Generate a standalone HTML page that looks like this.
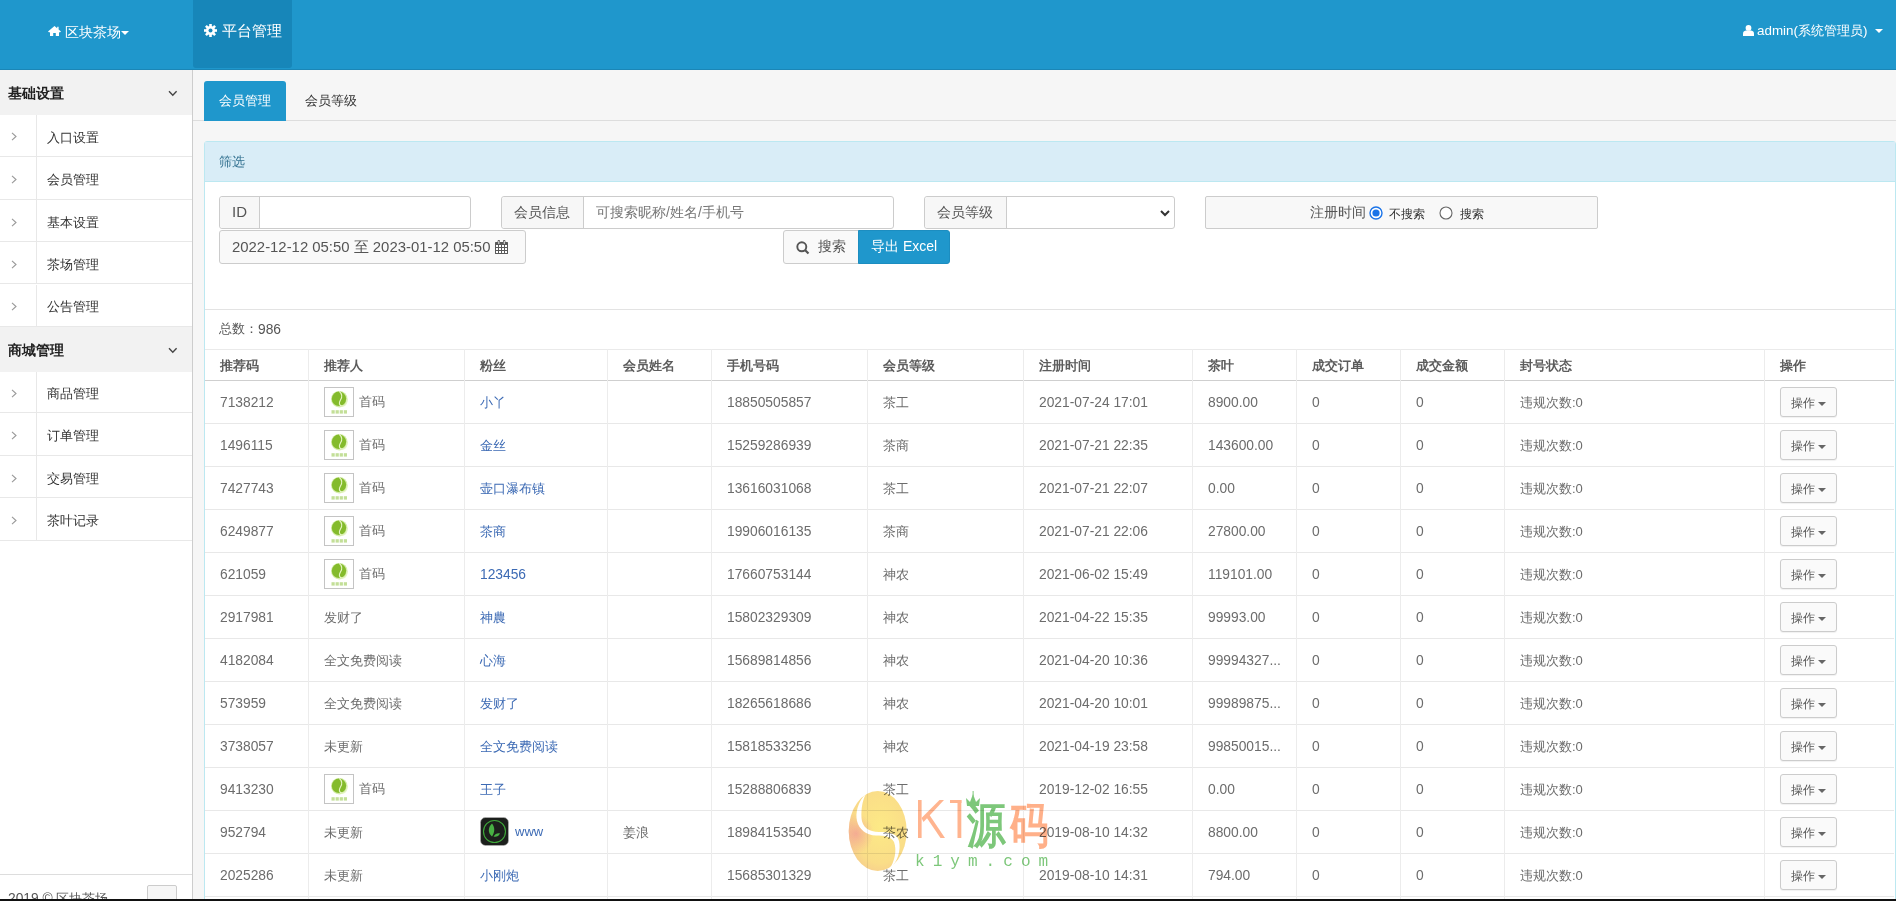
<!DOCTYPE html>
<html><head><meta charset="utf-8"><title>会员管理</title>
<style>
*{box-sizing:border-box;margin:0;padding:0}
html,body{width:1896px;height:901px;overflow:hidden;background:#f6f6f6;font-family:"Liberation Sans",sans-serif;font-size:13px;color:#666}
.abs{position:absolute}
#nav{position:absolute;left:0;top:0;width:1896px;height:70px;background:#1f97cc;border-bottom:1px solid #1b86b6}
#nav .act{position:absolute;left:193px;top:0;width:99px;height:68px;background:#1786b9;border-radius:0 0 3px 3px}
.wt{position:absolute;color:#fff;white-space:nowrap}
#side{position:absolute;left:0;top:70px;width:193px;height:829px;background:#fff;border-right:1px solid #cdcdcd}
.sh{position:absolute;left:0;width:192px;height:45px;background:#f2f2f2;color:#222;font-weight:bold;font-size:14px}
.sh span{position:absolute;left:8px;top:15px}
.sh svg{position:absolute;left:168px;top:20px}
.si{position:absolute;left:0;width:192px;border-bottom:1px solid #e8e8e8;color:#333}
.si:before{content:"";position:absolute;left:36px;top:0;bottom:0;border-left:1px solid #e8e8e8}
.si svg{position:absolute;left:11px}
.si span{position:absolute;left:47px}
#tabs{position:absolute;left:193px;top:70px;width:1703px;height:51px;border-bottom:1px solid #ddd}
.tab1{position:absolute;left:11px;top:11px;width:82px;height:40px;background:#1f97cc;color:#fff;border-radius:3px 3px 0 0}
.tab1 span,.tab2 span{position:absolute;left:15px;top:11px;white-space:nowrap}
.tab2{position:absolute;left:97px;top:11px;width:82px;height:40px;color:#333}
#panel{position:absolute;left:204px;top:141px;width:1692px;height:770px;background:#fff;border:1px solid #bce8f1;border-radius:3px}
#ph{position:absolute;left:0;top:0;width:1690px;height:40px;background:#d9edf7;border-bottom:1px solid #bce8f1;color:#31708f}
#ph span{position:absolute;left:14px;top:11px}
.ig{position:absolute;height:33px;border:1px solid #ccc;border-radius:3px;background:#fff}
.ig .ad{position:absolute;left:0;top:0;bottom:0;background:#f7f7f7;border-right:1px solid #ccc;border-radius:3px 0 0 3px;color:#555}
.ig .ad span{position:absolute;top:8px;white-space:nowrap}
.btn{position:absolute;height:34px;border:1px solid #ccc;border-radius:3px;background:#f9f9f9;color:#555;white-space:nowrap}
.d{font-size:13.8px;position:relative;top:1px}
.vl{position:absolute;width:1px;background:#ececec}
.hl{position:absolute;height:1px;background:#e8e8e8}
.c{position:absolute;white-space:nowrap;color:#6c6c6c}
.th{position:absolute;white-space:nowrap;color:#5c5c5c;font-weight:bold}
.lk{color:#3c6ab4}
.av{position:absolute;width:30px;height:30px;border:1px solid #c4c4c4;background:#fff}
.av svg{position:absolute;left:0;top:0}
.av2{position:absolute;width:29px;height:29px}
.ob{position:absolute;width:57px;height:30px;box-shadow:0 1px 1px rgba(0,0,0,.06);border:1px solid #ccc;border-radius:3px;background:#fafafa;color:#555;font-size:12px}
.ob span{position:absolute;left:10px;top:7px}
.ob i{position:absolute;left:37px;top:14px;width:0;height:0;border-left:4px solid transparent;border-right:4px solid transparent;border-top:4px solid #666}
</style></head><body>

<div id="nav"><div class="act"></div>
<svg class="abs" style="left:48px;top:26px" width="13" height="10" viewBox="0 0 13 10"><path d="M6.5 0 L0 5.6 L1.2 6.6 L2 5.9 L2 10 L5.2 10 L5.2 7 L7.8 7 L7.8 10 L11 10 L11 5.9 L11.8 6.6 L13 5.6 L10.6 3.5 L10.6 0.8 L9.2 0.8 L9.2 2.3 Z" fill="#fff"/></svg>
<span class="wt" style="left:65px;top:24px;font-size:14px">区块茶场</span>
<i class="abs" style="left:121px;top:31px;border-left:4px solid transparent;border-right:4px solid transparent;border-top:4px solid #fff"></i>
<svg class="abs" style="left:204px;top:24px" width="13" height="13" viewBox="0 0 13 13"><g fill="#fff"><circle cx="6.5" cy="6.5" r="4.6"/><rect x="5.2" y="0" width="2.6" height="13"/><rect x="0" y="5.2" width="13" height="2.6"/><rect x="5.2" y="0" width="2.6" height="13" transform="rotate(45 6.5 6.5)"/><rect x="5.2" y="0" width="2.6" height="13" transform="rotate(-45 6.5 6.5)"/></g><circle cx="6.5" cy="6.5" r="2" fill="#1786b9"/></svg>
<span class="wt" style="left:222px;top:22px;font-size:15px">平台管理</span>
<svg class="abs" style="left:1743px;top:25px" width="11" height="11" viewBox="0 0 11 11"><circle cx="5.5" cy="2.9" r="2.9" fill="#fff"/><path d="M0 11 L0 8.5 C0 6.5 2 5.6 3 5.6 L8 5.6 C9 5.6 11 6.5 11 8.5 L11 11 Z" fill="#fff"/></svg>
<span class="wt" style="left:1757px;top:22px;font-size:13.4px">admin(系统管理员)</span>
<i class="abs" style="left:1875px;top:29px;border-left:4px solid transparent;border-right:4px solid transparent;border-top:4px solid #fff"></i>
</div>

<div id="side">
<div class="sh" style="top:0px"><span>基础设置</span><svg width="10" height="7" viewBox="0 0 10 7"><path d="M1 1.3 L4.8 5.2 L8.6 1.3" stroke="#444" stroke-width="1.4" fill="none"/></svg></div>
<div class="si" style="top:44.5px;height:42.6px"><svg style="top:17.8px" width="6" height="9" viewBox="0 0 6 9"><path d="M1 0.8 L5 4.5 L1 8.2" stroke="#999" stroke-width="1.1" fill="none"/></svg><span style="top:14.0px">入口设置</span></div>
<div class="si" style="top:87.1px;height:42.7px"><svg style="top:17.9px" width="6" height="9" viewBox="0 0 6 9"><path d="M1 0.8 L5 4.5 L1 8.2" stroke="#999" stroke-width="1.1" fill="none"/></svg><span style="top:14.1px">会员管理</span></div>
<div class="si" style="top:129.8px;height:42.6px"><svg style="top:17.8px" width="6" height="9" viewBox="0 0 6 9"><path d="M1 0.8 L5 4.5 L1 8.2" stroke="#999" stroke-width="1.1" fill="none"/></svg><span style="top:14.0px">基本设置</span></div>
<div class="si" style="top:172.4px;height:42.1px"><svg style="top:17.5px" width="6" height="9" viewBox="0 0 6 9"><path d="M1 0.8 L5 4.5 L1 8.2" stroke="#999" stroke-width="1.1" fill="none"/></svg><span style="top:13.7px">茶场管理</span></div>
<div class="si" style="top:214.5px;height:42.4px"><svg style="top:17.7px" width="6" height="9" viewBox="0 0 6 9"><path d="M1 0.8 L5 4.5 L1 8.2" stroke="#999" stroke-width="1.1" fill="none"/></svg><span style="top:13.9px">公告管理</span></div>
<div class="sh" style="top:257px"><span>商城管理</span><svg width="10" height="7" viewBox="0 0 10 7"><path d="M1 1.3 L4.8 5.2 L8.6 1.3" stroke="#444" stroke-width="1.4" fill="none"/></svg></div>
<div class="si" style="top:301.6px;height:41.7px"><svg style="top:17.3px" width="6" height="9" viewBox="0 0 6 9"><path d="M1 0.8 L5 4.5 L1 8.2" stroke="#999" stroke-width="1.1" fill="none"/></svg><span style="top:13.5px">商品管理</span></div>
<div class="si" style="top:343.3px;height:42.7px"><svg style="top:17.8px" width="6" height="9" viewBox="0 0 6 9"><path d="M1 0.8 L5 4.5 L1 8.2" stroke="#999" stroke-width="1.1" fill="none"/></svg><span style="top:14.0px">订单管理</span></div>
<div class="si" style="top:386.0px;height:42.2px"><svg style="top:17.6px" width="6" height="9" viewBox="0 0 6 9"><path d="M1 0.8 L5 4.5 L1 8.2" stroke="#999" stroke-width="1.1" fill="none"/></svg><span style="top:13.8px">交易管理</span></div>
<div class="si" style="top:428.2px;height:42.9px"><svg style="top:18.0px" width="6" height="9" viewBox="0 0 6 9"><path d="M1 0.8 L5 4.5 L1 8.2" stroke="#999" stroke-width="1.1" fill="none"/></svg><span style="top:14.2px">茶叶记录</span></div>
<div class="hl" style="left:0;top:804px;width:192px;background:#ddd"></div>
<span class="c" style="left:8px;top:820px;color:#555"><span class="d" style="top:0">2019 ©</span> 区块茶场</span>
<div class="abs" style="left:147px;top:815px;width:30px;height:24px;border:1px solid #ccc;border-radius:2px;background:#f6f6f6"></div>
</div>
<div id="tabs"><div class="tab1"><span>会员管理</span></div><div class="tab2"><span>会员等级</span></div></div>
<div id="panel"><div id="ph"><span>筛选</span></div>
<div class="ig" style="left:14px;top:54px;width:252px"><div class="ad" style="width:40px"><span style="left:12px;font-size:15px;top:6px">ID</span></div></div>
<div class="ig" style="left:296px;top:54px;width:393px"><div class="ad" style="width:82px"><span style="left:12px;font-size:14px;top:7px">会员信息</span></div><span class="abs" style="left:94px;top:7px;font-size:14px;color:#777;white-space:nowrap">可搜索昵称/姓名/手机号</span></div>
<div class="ig" style="left:719px;top:54px;width:251px"><div class="ad" style="width:82px"><span style="left:12px;font-size:14px;top:7px">会员等级</span></div><svg class="abs" style="left:235px;top:13px" width="10" height="7" viewBox="0 0 10 7"><path d="M1 1 L5 5 L9 1" stroke="#333" stroke-width="2" fill="none"/></svg></div>
<div class="abs" style="left:1000px;top:54px;width:393px;height:33px;border:1px solid #ccc;border-radius:2px;background:#f8f8f8"></div>
<span class="abs" style="left:1105px;top:62px;color:#555;font-size:14px;white-space:nowrap">注册时间</span>
<svg class="abs" style="left:1164px;top:64px" width="14" height="14" viewBox="0 0 14 14"><circle cx="7" cy="7" r="6" fill="#fff" stroke="#1a73e8" stroke-width="1.4"/><circle cx="7" cy="7" r="3.6" fill="#1a73e8"/></svg>
<span class="abs" style="left:1184px;top:64px;color:#333;font-size:12px;white-space:nowrap">不搜索</span>
<svg class="abs" style="left:1234px;top:64px" width="14" height="14" viewBox="0 0 14 14"><circle cx="7" cy="7" r="6" fill="#fff" stroke="#666" stroke-width="1.1"/></svg>
<span class="abs" style="left:1255px;top:64px;color:#333;font-size:12px;white-space:nowrap">搜索</span>
<div class="abs" style="left:14px;top:88px;width:307px;height:34px;border:1px solid #ccc;border-radius:3px;background:#f9f9f9"><span class="abs" style="left:12px;top:7px;font-size:14.9px;color:#555;white-space:nowrap">2022-12-12 05:50 至 2023-01-12 05:50</span><svg class="abs" style="left:275px;top:9px" width="13" height="14" viewBox="0 0 13 14"><rect x="0" y="2" width="13" height="12" rx="0.6" fill="#5a5a5a"/><rect x="2.6" y="0" width="2.4" height="4.5" rx="1" fill="#5a5a5a"/><rect x="8" y="0" width="2.4" height="4.5" rx="1" fill="#5a5a5a"/><rect x="3.4" y="1" width="0.9" height="3" fill="#fff"/><rect x="8.8" y="1" width="0.9" height="3" fill="#fff"/><g fill="#fff"><rect x="1" y="5" width="2" height="2"/><rect x="4" y="5" width="2" height="2"/><rect x="7" y="5" width="2" height="2"/><rect x="10" y="5" width="2" height="2"/><rect x="1" y="8" width="2" height="2"/><rect x="4" y="8" width="2" height="2"/><rect x="7" y="8" width="2" height="2"/><rect x="10" y="8" width="2" height="2"/><rect x="1" y="11" width="2" height="2"/><rect x="4" y="11" width="2" height="2"/><rect x="7" y="11" width="2" height="2"/><rect x="10" y="11" width="2" height="2"/></g></svg></div>
<div class="btn" style="left:578px;top:88px;width:76px;border-radius:3px 0 0 3px"><svg class="abs" style="left:12px;top:10px" width="14" height="14" viewBox="0 0 14 14"><circle cx="5.8" cy="5.8" r="4.5" stroke="#555" stroke-width="1.9" fill="none"/><path d="M9 9 L12.5 12.5" stroke="#555" stroke-width="2.2"/></svg><span class="abs" style="left:34px;top:7px;font-size:14px">搜索</span></div>
<div class="btn" style="left:653px;top:88px;width:92px;background:#1f97cc;border-color:#1c8dc0;color:#fff;border-radius:0 3px 3px 0"><span class="abs" style="left:12px;top:7px;font-size:14px">导出 Excel</span></div>
<div class="hl" style="left:0;top:167px;width:1690px;background:#e3e3e3"></div>
<span class="c" style="left:14px;top:178px;color:#555">总数：<span class="d">986</span></span>
<div class="hl" style="left:0;top:207px;width:1689px;background:#eaeaea"></div>
<div class="hl" style="left:0;top:238px;width:1689px;background:#cfcfcf"></div>
<div class="hl" style="left:0;top:281px;width:1689px"></div>
<div class="hl" style="left:0;top:324px;width:1689px"></div>
<div class="hl" style="left:0;top:367px;width:1689px"></div>
<div class="hl" style="left:0;top:410px;width:1689px"></div>
<div class="hl" style="left:0;top:453px;width:1689px"></div>
<div class="hl" style="left:0;top:496px;width:1689px"></div>
<div class="hl" style="left:0;top:539px;width:1689px"></div>
<div class="hl" style="left:0;top:582px;width:1689px"></div>
<div class="hl" style="left:0;top:625px;width:1689px"></div>
<div class="hl" style="left:0;top:668px;width:1689px"></div>
<div class="hl" style="left:0;top:711px;width:1689px"></div>
<div class="hl" style="left:0;top:754px;width:1689px"></div>
<div class="vl" style="left:103px;top:207px;height:560px"></div>
<div class="vl" style="left:259px;top:207px;height:560px"></div>
<div class="vl" style="left:402px;top:207px;height:560px"></div>
<div class="vl" style="left:506px;top:207px;height:560px"></div>
<div class="vl" style="left:662px;top:207px;height:560px"></div>
<div class="vl" style="left:818px;top:207px;height:560px"></div>
<div class="vl" style="left:987px;top:207px;height:560px"></div>
<div class="vl" style="left:1091px;top:207px;height:560px"></div>
<div class="vl" style="left:1195px;top:207px;height:560px"></div>
<div class="vl" style="left:1299px;top:207px;height:560px"></div>
<div class="vl" style="left:1559px;top:207px;height:560px"></div>
<span class="th" style="left:15px;top:215px">推荐码</span>
<span class="th" style="left:119px;top:215px">推荐人</span>
<span class="th" style="left:275px;top:215px">粉丝</span>
<span class="th" style="left:418px;top:215px">会员姓名</span>
<span class="th" style="left:522px;top:215px">手机号码</span>
<span class="th" style="left:678px;top:215px">会员等级</span>
<span class="th" style="left:834px;top:215px">注册时间</span>
<span class="th" style="left:1003px;top:215px">茶叶</span>
<span class="th" style="left:1107px;top:215px">成交订单</span>
<span class="th" style="left:1211px;top:215px">成交金额</span>
<span class="th" style="left:1315px;top:215px">封号状态</span>
<span class="th" style="left:1575px;top:215px">操作</span>
<span class="c" style="left:15px;top:252px"><span class="d">7138212</span></span>
<span class="av" style="left:119px;top:245px"><svg width="28" height="28" viewBox="0 0 28 28"><circle cx="14.3" cy="11.2" r="8.3" fill="#d4ecaa"/><circle cx="14" cy="10.8" r="7.2" fill="#84bb2c"/><path d="M14.2 3.2 C17.5 6 17.2 9.5 15.2 12.5 C13.6 15 14.2 17.8 17.2 18.2 C20 18.3 21.8 15.5 22.3 11.5" stroke="#e6f5c4" stroke-width="1.2" fill="none"/><g fill="#c3df98"><rect x="6.5" y="22.2" width="3.2" height="3.4"/><rect x="10.6" y="22.2" width="3.2" height="3.4"/><rect x="14.7" y="22.2" width="3.2" height="3.4"/><rect x="18.8" y="22.2" width="3.2" height="3.4"/></g></svg></span>
<span class="c" style="left:154px;top:251px">首码</span>
<span class="c lk" style="left:275px;top:252px">小丫</span>
<span class="c" style="left:522px;top:252px"><span class="d">18850505857</span></span>
<span class="c" style="left:678px;top:252px">茶工</span>
<span class="c" style="left:834px;top:252px"><span class="d">2021-07-24 17:01</span></span>
<span class="c" style="left:1003px;top:252px"><span class="d">8900.00</span></span>
<span class="c" style="left:1107px;top:252px"><span class="d">0</span></span>
<span class="c" style="left:1211px;top:252px"><span class="d">0</span></span>
<span class="c" style="left:1315px;top:252px">违规次数:0</span>
<div class="ob" style="left:1575px;top:245px"><span>操作</span><i></i></div>
<span class="c" style="left:15px;top:295px"><span class="d">1496115</span></span>
<span class="av" style="left:119px;top:288px"><svg width="28" height="28" viewBox="0 0 28 28"><circle cx="14.3" cy="11.2" r="8.3" fill="#d4ecaa"/><circle cx="14" cy="10.8" r="7.2" fill="#84bb2c"/><path d="M14.2 3.2 C17.5 6 17.2 9.5 15.2 12.5 C13.6 15 14.2 17.8 17.2 18.2 C20 18.3 21.8 15.5 22.3 11.5" stroke="#e6f5c4" stroke-width="1.2" fill="none"/><g fill="#c3df98"><rect x="6.5" y="22.2" width="3.2" height="3.4"/><rect x="10.6" y="22.2" width="3.2" height="3.4"/><rect x="14.7" y="22.2" width="3.2" height="3.4"/><rect x="18.8" y="22.2" width="3.2" height="3.4"/></g></svg></span>
<span class="c" style="left:154px;top:294px">首码</span>
<span class="c lk" style="left:275px;top:295px">金丝</span>
<span class="c" style="left:522px;top:295px"><span class="d">15259286939</span></span>
<span class="c" style="left:678px;top:295px">茶商</span>
<span class="c" style="left:834px;top:295px"><span class="d">2021-07-21 22:35</span></span>
<span class="c" style="left:1003px;top:295px"><span class="d">143600.00</span></span>
<span class="c" style="left:1107px;top:295px"><span class="d">0</span></span>
<span class="c" style="left:1211px;top:295px"><span class="d">0</span></span>
<span class="c" style="left:1315px;top:295px">违规次数:0</span>
<div class="ob" style="left:1575px;top:288px"><span>操作</span><i></i></div>
<span class="c" style="left:15px;top:338px"><span class="d">7427743</span></span>
<span class="av" style="left:119px;top:331px"><svg width="28" height="28" viewBox="0 0 28 28"><circle cx="14.3" cy="11.2" r="8.3" fill="#d4ecaa"/><circle cx="14" cy="10.8" r="7.2" fill="#84bb2c"/><path d="M14.2 3.2 C17.5 6 17.2 9.5 15.2 12.5 C13.6 15 14.2 17.8 17.2 18.2 C20 18.3 21.8 15.5 22.3 11.5" stroke="#e6f5c4" stroke-width="1.2" fill="none"/><g fill="#c3df98"><rect x="6.5" y="22.2" width="3.2" height="3.4"/><rect x="10.6" y="22.2" width="3.2" height="3.4"/><rect x="14.7" y="22.2" width="3.2" height="3.4"/><rect x="18.8" y="22.2" width="3.2" height="3.4"/></g></svg></span>
<span class="c" style="left:154px;top:337px">首码</span>
<span class="c lk" style="left:275px;top:338px">壶口瀑布镇</span>
<span class="c" style="left:522px;top:338px"><span class="d">13616031068</span></span>
<span class="c" style="left:678px;top:338px">茶工</span>
<span class="c" style="left:834px;top:338px"><span class="d">2021-07-21 22:07</span></span>
<span class="c" style="left:1003px;top:338px"><span class="d">0.00</span></span>
<span class="c" style="left:1107px;top:338px"><span class="d">0</span></span>
<span class="c" style="left:1211px;top:338px"><span class="d">0</span></span>
<span class="c" style="left:1315px;top:338px">违规次数:0</span>
<div class="ob" style="left:1575px;top:331px"><span>操作</span><i></i></div>
<span class="c" style="left:15px;top:381px"><span class="d">6249877</span></span>
<span class="av" style="left:119px;top:374px"><svg width="28" height="28" viewBox="0 0 28 28"><circle cx="14.3" cy="11.2" r="8.3" fill="#d4ecaa"/><circle cx="14" cy="10.8" r="7.2" fill="#84bb2c"/><path d="M14.2 3.2 C17.5 6 17.2 9.5 15.2 12.5 C13.6 15 14.2 17.8 17.2 18.2 C20 18.3 21.8 15.5 22.3 11.5" stroke="#e6f5c4" stroke-width="1.2" fill="none"/><g fill="#c3df98"><rect x="6.5" y="22.2" width="3.2" height="3.4"/><rect x="10.6" y="22.2" width="3.2" height="3.4"/><rect x="14.7" y="22.2" width="3.2" height="3.4"/><rect x="18.8" y="22.2" width="3.2" height="3.4"/></g></svg></span>
<span class="c" style="left:154px;top:380px">首码</span>
<span class="c lk" style="left:275px;top:381px">茶商</span>
<span class="c" style="left:522px;top:381px"><span class="d">19906016135</span></span>
<span class="c" style="left:678px;top:381px">茶商</span>
<span class="c" style="left:834px;top:381px"><span class="d">2021-07-21 22:06</span></span>
<span class="c" style="left:1003px;top:381px"><span class="d">27800.00</span></span>
<span class="c" style="left:1107px;top:381px"><span class="d">0</span></span>
<span class="c" style="left:1211px;top:381px"><span class="d">0</span></span>
<span class="c" style="left:1315px;top:381px">违规次数:0</span>
<div class="ob" style="left:1575px;top:374px"><span>操作</span><i></i></div>
<span class="c" style="left:15px;top:424px"><span class="d">621059</span></span>
<span class="av" style="left:119px;top:417px"><svg width="28" height="28" viewBox="0 0 28 28"><circle cx="14.3" cy="11.2" r="8.3" fill="#d4ecaa"/><circle cx="14" cy="10.8" r="7.2" fill="#84bb2c"/><path d="M14.2 3.2 C17.5 6 17.2 9.5 15.2 12.5 C13.6 15 14.2 17.8 17.2 18.2 C20 18.3 21.8 15.5 22.3 11.5" stroke="#e6f5c4" stroke-width="1.2" fill="none"/><g fill="#c3df98"><rect x="6.5" y="22.2" width="3.2" height="3.4"/><rect x="10.6" y="22.2" width="3.2" height="3.4"/><rect x="14.7" y="22.2" width="3.2" height="3.4"/><rect x="18.8" y="22.2" width="3.2" height="3.4"/></g></svg></span>
<span class="c" style="left:154px;top:423px">首码</span>
<span class="c lk" style="left:275px;top:424px"><span class="d">123456</span></span>
<span class="c" style="left:522px;top:424px"><span class="d">17660753144</span></span>
<span class="c" style="left:678px;top:424px">神农</span>
<span class="c" style="left:834px;top:424px"><span class="d">2021-06-02 15:49</span></span>
<span class="c" style="left:1003px;top:424px"><span class="d">119101.00</span></span>
<span class="c" style="left:1107px;top:424px"><span class="d">0</span></span>
<span class="c" style="left:1211px;top:424px"><span class="d">0</span></span>
<span class="c" style="left:1315px;top:424px">违规次数:0</span>
<div class="ob" style="left:1575px;top:417px"><span>操作</span><i></i></div>
<span class="c" style="left:15px;top:467px"><span class="d">2917981</span></span>
<span class="c" style="left:119px;top:467px">发财了</span>
<span class="c lk" style="left:275px;top:467px">神農</span>
<span class="c" style="left:522px;top:467px"><span class="d">15802329309</span></span>
<span class="c" style="left:678px;top:467px">神农</span>
<span class="c" style="left:834px;top:467px"><span class="d">2021-04-22 15:35</span></span>
<span class="c" style="left:1003px;top:467px"><span class="d">99993.00</span></span>
<span class="c" style="left:1107px;top:467px"><span class="d">0</span></span>
<span class="c" style="left:1211px;top:467px"><span class="d">0</span></span>
<span class="c" style="left:1315px;top:467px">违规次数:0</span>
<div class="ob" style="left:1575px;top:460px"><span>操作</span><i></i></div>
<span class="c" style="left:15px;top:510px"><span class="d">4182084</span></span>
<span class="c" style="left:119px;top:510px">全文免费阅读</span>
<span class="c lk" style="left:275px;top:510px">心海</span>
<span class="c" style="left:522px;top:510px"><span class="d">15689814856</span></span>
<span class="c" style="left:678px;top:510px">神农</span>
<span class="c" style="left:834px;top:510px"><span class="d">2021-04-20 10:36</span></span>
<span class="c" style="left:1003px;top:510px"><span class="d">99994327...</span></span>
<span class="c" style="left:1107px;top:510px"><span class="d">0</span></span>
<span class="c" style="left:1211px;top:510px"><span class="d">0</span></span>
<span class="c" style="left:1315px;top:510px">违规次数:0</span>
<div class="ob" style="left:1575px;top:503px"><span>操作</span><i></i></div>
<span class="c" style="left:15px;top:553px"><span class="d">573959</span></span>
<span class="c" style="left:119px;top:553px">全文免费阅读</span>
<span class="c lk" style="left:275px;top:553px">发财了</span>
<span class="c" style="left:522px;top:553px"><span class="d">18265618686</span></span>
<span class="c" style="left:678px;top:553px">神农</span>
<span class="c" style="left:834px;top:553px"><span class="d">2021-04-20 10:01</span></span>
<span class="c" style="left:1003px;top:553px"><span class="d">99989875...</span></span>
<span class="c" style="left:1107px;top:553px"><span class="d">0</span></span>
<span class="c" style="left:1211px;top:553px"><span class="d">0</span></span>
<span class="c" style="left:1315px;top:553px">违规次数:0</span>
<div class="ob" style="left:1575px;top:546px"><span>操作</span><i></i></div>
<span class="c" style="left:15px;top:596px"><span class="d">3738057</span></span>
<span class="c" style="left:119px;top:596px">未更新</span>
<span class="c lk" style="left:275px;top:596px">全文免费阅读</span>
<span class="c" style="left:522px;top:596px"><span class="d">15818533256</span></span>
<span class="c" style="left:678px;top:596px">神农</span>
<span class="c" style="left:834px;top:596px"><span class="d">2021-04-19 23:58</span></span>
<span class="c" style="left:1003px;top:596px"><span class="d">99850015...</span></span>
<span class="c" style="left:1107px;top:596px"><span class="d">0</span></span>
<span class="c" style="left:1211px;top:596px"><span class="d">0</span></span>
<span class="c" style="left:1315px;top:596px">违规次数:0</span>
<div class="ob" style="left:1575px;top:589px"><span>操作</span><i></i></div>
<span class="c" style="left:15px;top:639px"><span class="d">9413230</span></span>
<span class="av" style="left:119px;top:632px"><svg width="28" height="28" viewBox="0 0 28 28"><circle cx="14.3" cy="11.2" r="8.3" fill="#d4ecaa"/><circle cx="14" cy="10.8" r="7.2" fill="#84bb2c"/><path d="M14.2 3.2 C17.5 6 17.2 9.5 15.2 12.5 C13.6 15 14.2 17.8 17.2 18.2 C20 18.3 21.8 15.5 22.3 11.5" stroke="#e6f5c4" stroke-width="1.2" fill="none"/><g fill="#c3df98"><rect x="6.5" y="22.2" width="3.2" height="3.4"/><rect x="10.6" y="22.2" width="3.2" height="3.4"/><rect x="14.7" y="22.2" width="3.2" height="3.4"/><rect x="18.8" y="22.2" width="3.2" height="3.4"/></g></svg></span>
<span class="c" style="left:154px;top:638px">首码</span>
<span class="c lk" style="left:275px;top:639px">王子</span>
<span class="c" style="left:522px;top:639px"><span class="d">15288806839</span></span>
<span class="c" style="left:678px;top:639px">茶工</span>
<span class="c" style="left:834px;top:639px"><span class="d">2019-12-02 16:55</span></span>
<span class="c" style="left:1003px;top:639px"><span class="d">0.00</span></span>
<span class="c" style="left:1107px;top:639px"><span class="d">0</span></span>
<span class="c" style="left:1211px;top:639px"><span class="d">0</span></span>
<span class="c" style="left:1315px;top:639px">违规次数:0</span>
<div class="ob" style="left:1575px;top:632px"><span>操作</span><i></i></div>
<span class="c" style="left:15px;top:682px"><span class="d">952794</span></span>
<span class="c" style="left:119px;top:682px">未更新</span>
<span class="av2" style="left:275px;top:675px"><svg width="29" height="29" viewBox="0 0 29 29"><rect x="0.5" y="0.5" width="28" height="28" rx="5" fill="#1c1f1c" stroke="#bbb" stroke-width="0.6"/><circle cx="14.5" cy="14.5" r="11" stroke="#3fa73a" stroke-width="1.1" fill="none"/><path d="M12 6.5 C8 10 7.5 16 12 19.5 C15 15 15 10 12 6.5Z" fill="#48b043"/><path d="M13.5 19.5 C15 16.5 18.5 15.5 20 16.5 C19 19 16 20.5 13.5 19.5Z" fill="#48b043"/></svg></span>
<span class="c lk" style="left:310px;top:682px">www</span>
<span class="c" style="left:418px;top:682px">姜浪</span>
<span class="c" style="left:522px;top:682px"><span class="d">18984153540</span></span>
<span class="c" style="left:678px;top:682px">茶农</span>
<span class="c" style="left:834px;top:682px"><span class="d">2019-08-10 14:32</span></span>
<span class="c" style="left:1003px;top:682px"><span class="d">8800.00</span></span>
<span class="c" style="left:1107px;top:682px"><span class="d">0</span></span>
<span class="c" style="left:1211px;top:682px"><span class="d">0</span></span>
<span class="c" style="left:1315px;top:682px">违规次数:0</span>
<div class="ob" style="left:1575px;top:675px"><span>操作</span><i></i></div>
<span class="c" style="left:15px;top:725px"><span class="d">2025286</span></span>
<span class="c" style="left:119px;top:725px">未更新</span>
<span class="c lk" style="left:275px;top:725px">小刚炮</span>
<span class="c" style="left:522px;top:725px"><span class="d">15685301329</span></span>
<span class="c" style="left:678px;top:725px">茶工</span>
<span class="c" style="left:834px;top:725px"><span class="d">2019-08-10 14:31</span></span>
<span class="c" style="left:1003px;top:725px"><span class="d">794.00</span></span>
<span class="c" style="left:1107px;top:725px"><span class="d">0</span></span>
<span class="c" style="left:1211px;top:725px"><span class="d">0</span></span>
<span class="c" style="left:1315px;top:725px">违规次数:0</span>
<div class="ob" style="left:1575px;top:718px"><span>操作</span><i></i></div>
</div>
<svg class="abs" style="left:840px;top:785px;mix-blend-mode:multiply" width="215" height="92" viewBox="0 0 215 92">
<defs>
<radialGradient id="g1" cx="0.55" cy="0.45" r="0.65"><stop offset="0" stop-color="#fde87c"/><stop offset="0.7" stop-color="#fadb7e"/><stop offset="1" stop-color="#f5c585"/></radialGradient>
<radialGradient id="g2" cx="0.2" cy="0.53" r="0.22"><stop offset="0" stop-color="#f08a9a" stop-opacity="0.6"/><stop offset="1" stop-color="#f08a9a" stop-opacity="0"/></radialGradient>
<clipPath id="ce"><ellipse cx="37.7" cy="46" rx="29" ry="40"/></clipPath>
</defs>
<ellipse cx="37.7" cy="46" rx="29" ry="40" fill="url(#g1)" opacity="0.92"/>
<rect x="0" y="0" width="80" height="92" fill="url(#g2)" clip-path="url(#ce)"/>
<path d="M26 9 C18 16 15 28 17 36 C19 44 26 50.5 36 50.5 C44 50.8 51 51 54 57 C57 65 55 76 49 85 C58 77 61 65 59 56 C57 48 49 47 39 47 C29 47 22 42 21.5 33 C21 22 23 14 26 9 Z" fill="#fff"/>
<g fill="#ffb089" opacity="0.95">
<rect x="78" y="15" width="3.6" height="38"/>
<path d="M99.5 15 L104 15 L83.5 37 L81.5 33 Z"/>
<path d="M85.5 31 L88.5 28.5 L105 53 L100.5 53 Z"/>
<rect x="110" y="15" width="11.5" height="3"/>
<rect x="117.5" y="15" width="3.8" height="38"/>
</g>
<g fill="#7dc77a">
<path d="M126 13 L130 17 L133 9 L136 17 L140 13 L139 21 L127 21 Z"/>
<rect x="132.6" y="6" width="1" height="5"/>
</g>
<text x="0" y="0" transform="translate(127 57) scale(0.98 1.22)" font-family="Liberation Sans" font-weight="bold" font-size="39" fill="#7dc77a">源</text>
<text x="0" y="0" transform="translate(170 57) scale(0.98 1.22)" font-family="Liberation Sans" font-weight="bold" font-size="39" fill="#ffb089">码</text>
<text x="75" y="81" font-family="Liberation Mono" font-size="16" fill="#7dc77a" letter-spacing="8.05">k1ym.com</text>
</svg>
<div class="abs" style="left:0;top:899px;width:1896px;height:2px;background:#111"></div>
</body></html>
